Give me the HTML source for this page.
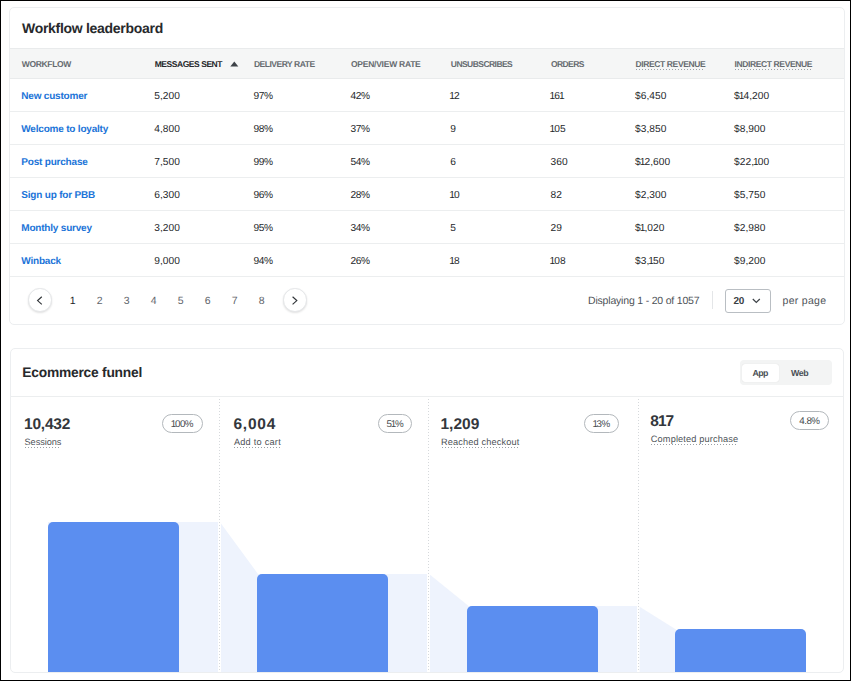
<!DOCTYPE html>
<html><head><meta charset="utf-8"><style>
html,body{margin:0;padding:0}
body{width:851px;height:681px;position:relative;overflow:hidden;background:#fff;font-family:"Liberation Sans",sans-serif;text-rendering:geometricPrecision}
.frame{position:absolute;left:0;top:0;width:849px;height:679px;border:1px solid #000;}
.card{position:absolute;background:#fff;border:1px solid #eceef0;border-radius:5px;box-sizing:border-box}
.t{position:absolute;white-space:nowrap;line-height:1}
.ul{position:absolute;height:1px;background:linear-gradient(to right,#9aa0a5 1px,transparent 1px) 0 0/3px 1px repeat-x}
.row{position:absolute;height:1px;background:#eceeef}
.circ{position:absolute;width:23.5px;height:23.5px;border-radius:50%;border:1px solid #e4e6e8;box-shadow:0 1px 2px rgba(0,0,0,.12);background:#fff;box-sizing:border-box}
.badge{position:absolute;height:19px;border:1px solid #b3b8bc;border-radius:10px;box-sizing:border-box}
.vdiv{position:absolute;width:1px;background:linear-gradient(to bottom,#d6d9dc 1px,transparent 1px) 0 0/1px 3px repeat-y}
.bar{position:absolute;background:#5b8ef0;border-radius:5px 5px 0 0}
.lt{position:absolute;background:#eef3fd}
</style></head><body>
<div class="frame"></div>
<div class="card" style="left:9px;top:7px;width:836px;height:318px"></div>
<div class="t" style="left:22.00px;top:21px;font-size:14px;font-weight:700;color:#27292c;letter-spacing:-0.29px;">Workflow leaderboard</div>
<div style="position:absolute;left:10px;width:834px;top:48px;height:31px;background:#f5f6f6;border-top:1px solid #e9ebec;border-bottom:1px solid #e9ebec;box-sizing:border-box"></div>
<div class="t" style="left:21.80px;top:60px;font-size:8.5px;font-weight:700;color:#666b70;letter-spacing:-0.34px;">WORKFLOW</div>
<div class="t" style="left:154.70px;top:60px;font-size:8.5px;font-weight:700;color:#24272a;letter-spacing:-0.45px;">MESSAGES SENT</div>
<div class="t" style="left:253.90px;top:60px;font-size:8.5px;font-weight:700;color:#666b70;letter-spacing:-0.47px;">DELIVERY RATE</div>
<div class="t" style="left:351.00px;top:60px;font-size:8.5px;font-weight:700;color:#666b70;letter-spacing:-0.25px;">OPEN/VIEW RATE</div>
<div class="t" style="left:450.80px;top:60px;font-size:8.5px;font-weight:700;color:#666b70;letter-spacing:-0.55px;">UNSUBSCRIBES</div>
<div class="t" style="left:551.00px;top:60px;font-size:8.5px;font-weight:700;color:#666b70;letter-spacing:-0.6px;">ORDERS</div>
<div class="t" style="left:635.50px;top:60px;font-size:8.5px;font-weight:700;color:#666b70;letter-spacing:-0.38px;">DIRECT REVENUE</div>
<div class="t" style="left:734.50px;top:60px;font-size:8.5px;font-weight:700;color:#666b70;letter-spacing:-0.38px;">INDIRECT REVENUE</div>
<svg style="position:absolute;left:230px;top:61px" width="9" height="6" viewBox="0 0 9 6"><path d="M0.3 5.4 L4.3 0.5 L8.3 5.4 Z" fill="#3d4247"/></svg>
<div class="ul" style="left:636px;width:69px;top:69px"></div>
<div class="ul" style="left:735px;width:78px;top:69px"></div>
<div class="t" style="left:21.30px;top:92px;font-size:10px;font-weight:700;color:#1b74d8;letter-spacing:-0.2px;">New customer</div>
<div class="t" style="left:154.20px;top:92px;font-size:10.2px;font-weight:400;color:#25282b;letter-spacing:0.05px;">5,200</div>
<div class="t" style="left:253.40px;top:92px;font-size:10.2px;font-weight:400;color:#25282b;letter-spacing:-0.4px;">97%</div>
<div class="t" style="left:350.50px;top:92px;font-size:10.2px;font-weight:400;color:#25282b;letter-spacing:-0.4px;">42%</div>
<div class="t" style="left:450.30px;top:92px;font-size:10.2px;font-weight:400;color:#25282b;letter-spacing:0.05px;"><span style="margin:0 -1px">1</span>2</div>
<div class="t" style="left:550.50px;top:92px;font-size:10.2px;font-weight:400;color:#25282b;letter-spacing:0.05px;"><span style="margin:0 -1px">1</span>6<span style="margin:0 -1px">1</span></div>
<div class="t" style="left:635.00px;top:92px;font-size:10.2px;font-weight:400;color:#25282b;letter-spacing:0.05px;">$6,450</div>
<div class="t" style="left:734.00px;top:92px;font-size:10.2px;font-weight:400;color:#25282b;letter-spacing:0.05px;">$<span style="margin:0 -1px">1</span>4,200</div>
<div class="row" style="left:10px;width:834px;top:111px"></div>
<div class="t" style="left:21.30px;top:125px;font-size:10px;font-weight:700;color:#1b74d8;letter-spacing:-0.2px;">Welcome to loyalty</div>
<div class="t" style="left:154.20px;top:125px;font-size:10.2px;font-weight:400;color:#25282b;letter-spacing:0.05px;">4,800</div>
<div class="t" style="left:253.40px;top:125px;font-size:10.2px;font-weight:400;color:#25282b;letter-spacing:-0.4px;">98%</div>
<div class="t" style="left:350.50px;top:125px;font-size:10.2px;font-weight:400;color:#25282b;letter-spacing:-0.4px;">37%</div>
<div class="t" style="left:450.30px;top:125px;font-size:10.2px;font-weight:400;color:#25282b;letter-spacing:0.05px;">9</div>
<div class="t" style="left:550.50px;top:125px;font-size:10.2px;font-weight:400;color:#25282b;letter-spacing:0.05px;"><span style="margin:0 -1px">1</span>05</div>
<div class="t" style="left:635.00px;top:125px;font-size:10.2px;font-weight:400;color:#25282b;letter-spacing:0.05px;">$3,850</div>
<div class="t" style="left:734.00px;top:125px;font-size:10.2px;font-weight:400;color:#25282b;letter-spacing:0.05px;">$8,900</div>
<div class="row" style="left:10px;width:834px;top:144px"></div>
<div class="t" style="left:21.30px;top:158px;font-size:10px;font-weight:700;color:#1b74d8;letter-spacing:-0.2px;">Post purchase</div>
<div class="t" style="left:154.20px;top:158px;font-size:10.2px;font-weight:400;color:#25282b;letter-spacing:0.05px;">7,500</div>
<div class="t" style="left:253.40px;top:158px;font-size:10.2px;font-weight:400;color:#25282b;letter-spacing:-0.4px;">99%</div>
<div class="t" style="left:350.50px;top:158px;font-size:10.2px;font-weight:400;color:#25282b;letter-spacing:-0.4px;">54%</div>
<div class="t" style="left:450.30px;top:158px;font-size:10.2px;font-weight:400;color:#25282b;letter-spacing:0.05px;">6</div>
<div class="t" style="left:550.50px;top:158px;font-size:10.2px;font-weight:400;color:#25282b;letter-spacing:0.05px;">360</div>
<div class="t" style="left:635.00px;top:158px;font-size:10.2px;font-weight:400;color:#25282b;letter-spacing:0.05px;">$<span style="margin:0 -1px">1</span>2,600</div>
<div class="t" style="left:734.00px;top:158px;font-size:10.2px;font-weight:400;color:#25282b;letter-spacing:0.05px;">$22,<span style="margin:0 -1px">1</span>00</div>
<div class="row" style="left:10px;width:834px;top:177px"></div>
<div class="t" style="left:21.30px;top:191px;font-size:10px;font-weight:700;color:#1b74d8;letter-spacing:-0.2px;">Sign up for PBB</div>
<div class="t" style="left:154.20px;top:191px;font-size:10.2px;font-weight:400;color:#25282b;letter-spacing:0.05px;">6,300</div>
<div class="t" style="left:253.40px;top:191px;font-size:10.2px;font-weight:400;color:#25282b;letter-spacing:-0.4px;">96%</div>
<div class="t" style="left:350.50px;top:191px;font-size:10.2px;font-weight:400;color:#25282b;letter-spacing:-0.4px;">28%</div>
<div class="t" style="left:450.30px;top:191px;font-size:10.2px;font-weight:400;color:#25282b;letter-spacing:0.05px;"><span style="margin:0 -1px">1</span>0</div>
<div class="t" style="left:550.50px;top:191px;font-size:10.2px;font-weight:400;color:#25282b;letter-spacing:0.05px;">82</div>
<div class="t" style="left:635.00px;top:191px;font-size:10.2px;font-weight:400;color:#25282b;letter-spacing:0.05px;">$2,300</div>
<div class="t" style="left:734.00px;top:191px;font-size:10.2px;font-weight:400;color:#25282b;letter-spacing:0.05px;">$5,750</div>
<div class="row" style="left:10px;width:834px;top:210px"></div>
<div class="t" style="left:21.30px;top:224px;font-size:10px;font-weight:700;color:#1b74d8;letter-spacing:-0.2px;">Monthly survey</div>
<div class="t" style="left:154.20px;top:224px;font-size:10.2px;font-weight:400;color:#25282b;letter-spacing:0.05px;">3,200</div>
<div class="t" style="left:253.40px;top:224px;font-size:10.2px;font-weight:400;color:#25282b;letter-spacing:-0.4px;">95%</div>
<div class="t" style="left:350.50px;top:224px;font-size:10.2px;font-weight:400;color:#25282b;letter-spacing:-0.4px;">34%</div>
<div class="t" style="left:450.30px;top:224px;font-size:10.2px;font-weight:400;color:#25282b;letter-spacing:0.05px;">5</div>
<div class="t" style="left:550.50px;top:224px;font-size:10.2px;font-weight:400;color:#25282b;letter-spacing:0.05px;">29</div>
<div class="t" style="left:635.00px;top:224px;font-size:10.2px;font-weight:400;color:#25282b;letter-spacing:0.05px;">$<span style="margin:0 -1px">1</span>,020</div>
<div class="t" style="left:734.00px;top:224px;font-size:10.2px;font-weight:400;color:#25282b;letter-spacing:0.05px;">$2,980</div>
<div class="row" style="left:10px;width:834px;top:243px"></div>
<div class="t" style="left:21.30px;top:257px;font-size:10px;font-weight:700;color:#1b74d8;letter-spacing:-0.2px;">Winback</div>
<div class="t" style="left:154.20px;top:257px;font-size:10.2px;font-weight:400;color:#25282b;letter-spacing:0.05px;">9,000</div>
<div class="t" style="left:253.40px;top:257px;font-size:10.2px;font-weight:400;color:#25282b;letter-spacing:-0.4px;">94%</div>
<div class="t" style="left:350.50px;top:257px;font-size:10.2px;font-weight:400;color:#25282b;letter-spacing:-0.4px;">26%</div>
<div class="t" style="left:450.30px;top:257px;font-size:10.2px;font-weight:400;color:#25282b;letter-spacing:0.05px;"><span style="margin:0 -1px">1</span>8</div>
<div class="t" style="left:550.50px;top:257px;font-size:10.2px;font-weight:400;color:#25282b;letter-spacing:0.05px;"><span style="margin:0 -1px">1</span>08</div>
<div class="t" style="left:635.00px;top:257px;font-size:10.2px;font-weight:400;color:#25282b;letter-spacing:0.05px;">$3,<span style="margin:0 -1px">1</span>50</div>
<div class="t" style="left:734.00px;top:257px;font-size:10.2px;font-weight:400;color:#25282b;letter-spacing:0.05px;">$9,200</div>
<div class="row" style="left:10px;width:834px;top:276px"></div>
<div class="circ" style="left:28.2px;top:288.4px"></div>
<svg style="position:absolute;left:36px;top:296px" width="8" height="10" viewBox="0 0 8 10"><path d="M5.8 0.8 L1.6 4.6 L5.8 8.4" fill="none" stroke="#2f3337" stroke-width="1.15"/></svg>
<div class="circ" style="left:283.1px;top:288.4px"></div>
<svg style="position:absolute;left:291px;top:296px" width="8" height="10" viewBox="0 0 8 10"><path d="M1.6 0.8 L5.8 4.6 L1.6 8.4" fill="none" stroke="#2f3337" stroke-width="1.15"/></svg>
<div class="t" style="left:57.70px;top:296px;font-size:10.5px;font-weight:400;color:#222528;letter-spacing:0px;width:30px;text-align:center">1</div>
<div class="t" style="left:84.70px;top:296px;font-size:10.5px;font-weight:400;color:#5f656b;letter-spacing:0px;width:30px;text-align:center">2</div>
<div class="t" style="left:111.70px;top:296px;font-size:10.5px;font-weight:400;color:#5f656b;letter-spacing:0px;width:30px;text-align:center">3</div>
<div class="t" style="left:138.70px;top:296px;font-size:10.5px;font-weight:400;color:#5f656b;letter-spacing:0px;width:30px;text-align:center">4</div>
<div class="t" style="left:165.70px;top:296px;font-size:10.5px;font-weight:400;color:#5f656b;letter-spacing:0px;width:30px;text-align:center">5</div>
<div class="t" style="left:192.70px;top:296px;font-size:10.5px;font-weight:400;color:#5f656b;letter-spacing:0px;width:30px;text-align:center">6</div>
<div class="t" style="left:219.70px;top:296px;font-size:10.5px;font-weight:400;color:#5f656b;letter-spacing:0px;width:30px;text-align:center">7</div>
<div class="t" style="left:246.70px;top:296px;font-size:10.5px;font-weight:400;color:#5f656b;letter-spacing:0px;width:30px;text-align:center">8</div>
<div class="t" style="left:588.00px;top:296px;font-size:10.5px;font-weight:400;color:#4d5257;letter-spacing:-0.19px;">Displaying 1 - 20 of 1057</div>
<div style="position:absolute;left:712px;top:291px;width:1px;height:18px;background:#e4e6e8"></div>
<div style="position:absolute;left:724.5px;top:288.5px;width:46px;height:24px;border:1px solid #b9bec3;border-radius:3px;box-sizing:border-box"></div>
<div class="t" style="left:733.50px;top:297px;font-size:10px;font-weight:700;color:#3a3f44;letter-spacing:-0.4px;">20</div>
<svg style="position:absolute;left:752px;top:298px" width="9" height="6" viewBox="0 0 9 6"><path d="M0.8 1 L4.3 4.5 L7.8 1" fill="none" stroke="#3d4247" stroke-width="1.2"/></svg>
<div class="t" style="left:782.50px;top:296px;font-size:10.5px;font-weight:400;color:#4d5257;letter-spacing:0.3px;">per page</div>
<div class="card" style="left:10px;top:348px;width:834px;height:325px"></div>
<div class="t" style="left:22.30px;top:366px;font-size:13.8px;font-weight:700;color:#27292c;letter-spacing:-0.23px;">Ecommerce funnel</div>
<div style="position:absolute;left:11px;width:832px;top:396px;height:1px;background:#eceeef"></div>
<div style="position:absolute;left:740px;top:360px;width:92px;height:24.5px;background:#f3f4f4;border-radius:4px"></div>
<div style="position:absolute;left:742px;top:364px;width:36.5px;height:17.5px;background:#fff;border-radius:3px;box-shadow:0 0 1px rgba(0,0,0,.15)"></div>
<div class="t" style="left:752.50px;top:369px;font-size:8.8px;font-weight:700;color:#4a4f54;letter-spacing:-0.6px;">App</div>
<div class="t" style="left:791.00px;top:369px;font-size:8.8px;font-weight:700;color:#4a4f54;letter-spacing:-0.45px;">Web</div>
<div style="position:absolute;left:11px;top:397px;width:832px;height:275px;overflow:hidden">
<div class="lt" style="left:36.50px;top:124.50px;width:170.50px;height:300.00px;"></div>
<div class="bar" style="left:36.50px;top:124.50px;width:131.20px;height:300.00px;"></div>
<div class="lt" style="left:245.60px;top:176.50px;width:170.40px;height:300.00px;"></div>
<svg style="position:absolute;left:0;top:0" width="832" height="300"><polygon points="210.00,126.60 246.60,176.50 246.60,300 210.00,300" fill="#eef3fd"/></svg>
<div class="bar" style="left:245.60px;top:176.50px;width:131.20px;height:300.00px;"></div>
<div class="lt" style="left:456.30px;top:208.70px;width:169.30px;height:300.00px;"></div>
<svg style="position:absolute;left:0;top:0" width="832" height="300"><polygon points="419.00,177.74 457.30,208.70 457.30,300 419.00,300" fill="#eef3fd"/></svg>
<div class="bar" style="left:456.30px;top:208.70px;width:131.20px;height:300.00px;"></div>
<svg style="position:absolute;left:0;top:0" width="832" height="300"><polygon points="628.60,209.66 665.00,232.40 665.00,300 628.60,300" fill="#eef3fd"/></svg>
<div class="bar" style="left:664.00px;top:232.40px;width:131.20px;height:300.00px;"></div>
<div class="vdiv" style="left:208px;top:-1px;height:300px"></div>
<div class="vdiv" style="left:417px;top:-1px;height:300px"></div>
<div class="vdiv" style="left:627px;top:-1px;height:300px"></div>
</div>
<div class="t" style="left:24.00px;top:417px;font-size:15.5px;font-weight:700;color:#33373c;letter-spacing:-0.2px;">10,432</div>
<div class="t" style="left:24.50px;top:438px;font-size:9.2px;font-weight:400;color:#4d5257;letter-spacing:-0.05px;">Sessions</div>
<div class="ul" style="left:25.00px;width:35.6px;top:447px"></div>
<div class="badge" style="left:162.10px;top:414px;width:40.50px"></div>
<div class="t" style="left:162.10px;top:420px;font-size:9.8px;font-weight:400;color:#464b50;letter-spacing:-0.5px;width:40.50px;text-align:center"><span style="margin:0 -0.8px">1</span>00%</div>
<div class="t" style="left:233.40px;top:417px;font-size:15.5px;font-weight:700;color:#33373c;letter-spacing:0.8px;">6,004</div>
<div class="t" style="left:233.90px;top:438px;font-size:9.2px;font-weight:400;color:#4d5257;letter-spacing:0.24px;">Add to cart</div>
<div class="ul" style="left:234.40px;width:46.4px;top:447px"></div>
<div class="badge" style="left:378.00px;top:414px;width:33.70px"></div>
<div class="t" style="left:378.00px;top:420px;font-size:9.8px;font-weight:400;color:#464b50;letter-spacing:-0.5px;width:33.70px;text-align:center">5<span style="margin:0 -0.8px">1</span>%</div>
<div class="t" style="left:440.50px;top:417px;font-size:15.5px;font-weight:700;color:#33373c;letter-spacing:0px;">1,209</div>
<div class="t" style="left:441.00px;top:438px;font-size:9.2px;font-weight:400;color:#4d5257;letter-spacing:0.15px;">Reached checkout</div>
<div class="ul" style="left:441.50px;width:77.2px;top:447px"></div>
<div class="badge" style="left:584.10px;top:414px;width:34.70px"></div>
<div class="t" style="left:584.10px;top:420px;font-size:9.8px;font-weight:400;color:#464b50;letter-spacing:-0.5px;width:34.70px;text-align:center"><span style="margin:0 -0.8px">1</span>3%</div>
<div class="t" style="left:650.30px;top:414px;font-size:15.5px;font-weight:700;color:#33373c;letter-spacing:-1.0px;">817</div>
<div class="t" style="left:650.80px;top:435px;font-size:9.2px;font-weight:400;color:#4d5257;letter-spacing:0.15px;">Completed purchase</div>
<div class="ul" style="left:651.30px;width:86.5px;top:444px"></div>
<div class="badge" style="left:790.00px;top:411px;width:38.80px"></div>
<div class="t" style="left:790.00px;top:417px;font-size:9.8px;font-weight:400;color:#464b50;letter-spacing:-0.5px;width:38.80px;text-align:center">4.8%</div>
</body></html>
